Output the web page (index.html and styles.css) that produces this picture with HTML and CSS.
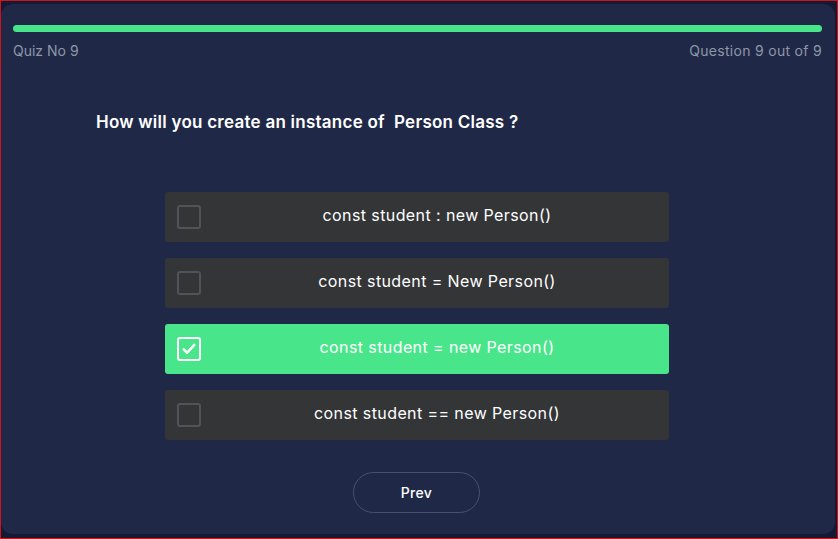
FILE: index.html
```html
<!DOCTYPE html>
<html>
<head>
<meta charset="utf-8">
<link rel="stylesheet" href="styles.css">
</head>
<body>
<div class="frame">
  <div class="card">
    <div class="progress"><div class="progress-fill"></div></div>
    <div class="meta">
      <span>Quiz No 9</span>
      <span>Question 9 out of 9</span>
    </div>
    <h2 class="question">How will you create an instance of&nbsp; Person Class ?</h2>
    <div class="options">
      <div class="option">
        <span class="box"></span>
        <span class="label">const student : new Person()</span>
      </div>
      <div class="option">
        <span class="box"></span>
        <span class="label">const student = New Person()</span>
      </div>
      <div class="option selected">
        <span class="box">
          <svg viewBox="0 0 24 24" width="18" height="18"><path d="M5 12.5l4.5 4.5L19 6.5" fill="none" stroke="#fff" stroke-width="3.4" stroke-linecap="round" stroke-linejoin="round"/></svg>
        </span>
        <span class="label">const student = new Person()</span>
      </div>
      <div class="option">
        <span class="box"></span>
        <span class="label">const student == new Person()</span>
      </div>
    </div>
    <div class="nav">
      <button class="prev">Prev</button>
    </div>
  </div>
</div>
</body>
</html>
```
FILE: styles.css
```css
* { box-sizing: border-box; }
html, body { margin: 0; padding: 0; }
body {
  font-family: Inter, "Open Sans", sans-serif;
  background: #151a36;
}
.frame {
  width: 838px;
  height: 539px;
  border: 1px solid #d3121c;
  background: #141934;
  padding: 3px 2px 4px 0;
}
.card {
  height: 100%;
  background: #1f2947;
  border-radius: 12px;
  padding: 21px 13px 0 12px;
}
.progress {
  height: 7px;
  border-radius: 4px;
  background: #1b2440;
}
.progress-fill {
  width: 100%;
  height: 100%;
  border-radius: 4px;
  background: #48e58a;
}
.meta {
  display: flex;
  justify-content: space-between;
  margin-top: 10px;
  font-size: 14px;
  color: #8f96a8;
  letter-spacing: 0.3px;
}
.meta span:first-child { letter-spacing: 0; }
.question {
  margin: 53px 0 0 83px;
  font-size: 17px;
  font-weight: 600;
  color: #ffffff;
  letter-spacing: 0.25px;
}
.options {
  width: 504px;
  margin: 60px 0 0 152px;
  display: flex;
  flex-direction: column;
  gap: 16px;
}
.option {
  height: 50px;
  background: #333537;
  border-radius: 3px;
  display: flex;
  align-items: center;
  padding-left: 12px;
}
.option.selected { background: #48e58a; }
.box {
  width: 24px;
  height: 24px;
  border: 2px solid #515456;
  border-radius: 3px;
  display: flex;
  align-items: center;
  justify-content: center;
  flex-shrink: 0;
}
.selected .box { border-color: #ffffff; }
.label {
  flex: 1;
  text-align: center;
  color: #ffffff;
  font-size: 16px;
  letter-spacing: 0.4px;
  padding-left: 4px;
  margin-top: -4px;
}
.nav {
  display: flex;
  justify-content: center;
  margin-top: 32px;
  padding-right: 2px;
}
.prev {
  width: 127px;
  height: 41px;
  border-radius: 21px;
  border: 1px solid #48526e;
  background: transparent;
  color: #ffffff;
  font-family: inherit;
  font-size: 14px;
  font-weight: 500;
  letter-spacing: 0.3px;
}
```
